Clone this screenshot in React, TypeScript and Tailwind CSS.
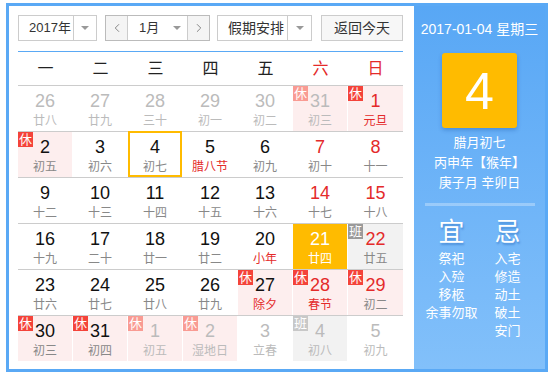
import { ChevronLeft, ChevronRight } from "lucide-react";

type Day = {
  n: number;
  lunar: string;
  other?: boolean;
  red?: boolean;
  fest?: boolean;
  tag?: "休" | "班";
  today?: boolean;
  selected?: boolean;
};

const weeks: Day[][] = [
  [
    { n: 26, lunar: "廿八", other: true },
    { n: 27, lunar: "廿九", other: true },
    { n: 28, lunar: "三十", other: true },
    { n: 29, lunar: "初一", other: true },
    { n: 30, lunar: "初二", other: true },
    { n: 31, lunar: "初三", other: true, tag: "休" },
    { n: 1, lunar: "元旦", red: true, fest: true, tag: "休" },
  ],
  [
    { n: 2, lunar: "初五", tag: "休" },
    { n: 3, lunar: "初六" },
    { n: 4, lunar: "初七", today: true },
    { n: 5, lunar: "腊八节", fest: true },
    { n: 6, lunar: "初九" },
    { n: 7, lunar: "初十", red: true },
    { n: 8, lunar: "十一", red: true },
  ],
  [
    { n: 9, lunar: "十二" },
    { n: 10, lunar: "十三" },
    { n: 11, lunar: "十四" },
    { n: 12, lunar: "十五" },
    { n: 13, lunar: "十六" },
    { n: 14, lunar: "十七", red: true },
    { n: 15, lunar: "十八", red: true },
  ],
  [
    { n: 16, lunar: "十九" },
    { n: 17, lunar: "二十" },
    { n: 18, lunar: "廿一" },
    { n: 19, lunar: "廿二" },
    { n: 20, lunar: "小年", fest: true },
    { n: 21, lunar: "廿四", selected: true },
    { n: 22, lunar: "廿五", red: true, tag: "班" },
  ],
  [
    { n: 23, lunar: "廿六" },
    { n: 24, lunar: "廿七" },
    { n: 25, lunar: "廿八" },
    { n: 26, lunar: "廿九" },
    { n: 27, lunar: "除夕", fest: true, tag: "休" },
    { n: 28, lunar: "春节", red: true, fest: true, tag: "休" },
    { n: 29, lunar: "初二", red: true, tag: "休" },
  ],
  [
    { n: 30, lunar: "初三", tag: "休" },
    { n: 31, lunar: "初四", tag: "休" },
    { n: 1, lunar: "初五", other: true, tag: "休" },
    { n: 2, lunar: "湿地日", other: true, tag: "休" },
    { n: 3, lunar: "立春", other: true },
    { n: 4, lunar: "初八", other: true, tag: "班" },
    { n: 5, lunar: "初九", other: true },
  ],
];

const weekdays = ["一", "二", "三", "四", "五", "六", "日"];

const Caret = () => (
  <span className="block w-0 h-0 border-l-[4px] border-r-[4px] border-t-[4px] border-l-transparent border-r-transparent border-t-[#999]" />
);

const DayCell = ({ d }: { d: Day }) => {
  let bg = "";
  if (d.selected) bg = "bg-[#ffbb00]";
  else if (d.tag === "休") bg = "bg-[#fdeeee]";
  else if (d.tag === "班") bg = "bg-[#f2f2f2]";

  let numColor = "text-[#111]";
  if (d.red) numColor = "text-[#e42a2a]";
  if (d.other) numColor = "text-[#bbb]";
  if (d.selected) numColor = "text-white";

  let lunarColor = "text-[#888]";
  if (d.fest) lunarColor = "text-[#e42a2a]";
  if (d.other) lunarColor = "text-[#bbb]";
  if (d.selected) lunarColor = "text-white";

  let badge = "";
  if (d.tag === "休") badge = d.other ? "bg-[#f99b93]" : "bg-[#f4433a]";
  if (d.tag === "班") badge = d.other ? "bg-[#c8c8c8]" : "bg-[#9a9a9a]";

  return (
    <div className="relative border-r border-white last:border-r-0 h-[45px]">
      <div className={`h-full ${bg} pt-[5px] text-center`}>
        <div className={`text-[18px] leading-[20px] ${numColor} font-['Liberation_Sans',Arial,sans-serif]`}>
          {d.n}
        </div>
        <div className={`mt-[2px] text-[12px] leading-[16px] ${lunarColor}`}>{d.lunar}</div>
      </div>
      {d.tag && (
        <span
          className={`absolute top-0 left-0 w-[15px] h-[15px] ${badge} text-white text-[13px] leading-[15px] text-center`}
        >
          {d.tag}
        </span>
      )}
      {d.today && (
        <span className="absolute -top-[1px] left-0 right-0 bottom-0 border-2 border-[#ffbb00]" />
      )}
    </div>
  );
};

export default function App() {
  return (
    <div className="w-[548px] h-[375px] bg-white pt-[3px] pl-[6px] font-['Liberation_Sans','Noto_Sans_CJK_SC',sans-serif]">
      <div className="w-[542px] h-[369px] border-[3px] border-[#5aa9f5] flex">
        {/* Calendar */}
        <div className="w-[405px] bg-white pt-[9px] pl-[9px] pr-[11px]">
          <div className="flex items-center h-[26px] text-[14px] text-[#333] whitespace-nowrap">
            <div className="flex h-full w-[79px] border border-[#ccc]">
              <span className="w-[54px] shrink-0 pl-[10px] text-[13px] leading-[24px]">2017年</span>
              <span className="flex-1 border-l border-[#ccc] flex items-center justify-center">
                <Caret />
              </span>
            </div>
            <div className="ml-[8px] flex h-full w-[105px] border border-[#bbb]">
              <span className="w-[22px] shrink-0 bg-[#f4f4f4] border-r border-[#ccc] flex items-center justify-center text-[#777]">
                <ChevronLeft size={14} strokeWidth={1.5} />
              </span>
              <span className="w-[59px] shrink-0 flex items-center justify-between pl-[11px] pr-[6px]">
                <span className="text-[13px] leading-[24px]">1月</span>
                <Caret />
              </span>
              <span className="flex-1 bg-[#f4f4f4] border-l border-[#ccc] flex items-center justify-center text-[#777]">
                <ChevronRight size={14} strokeWidth={1.5} />
              </span>
            </div>
            <div className="ml-[7px] flex h-full w-[95px] border border-[#ccc]">
              <span className="w-[69px] shrink-0 pl-[10px] leading-[24px]">假期安排</span>
              <span className="flex-1 border-l border-[#ccc] flex items-center justify-center">
                <Caret />
              </span>
            </div>
            <button className="ml-[9px] h-full w-[82px] border border-[#ccc] bg-[#f7f7f7] text-[14px] text-[#333] leading-[24px]">
              返回今天
            </button>
          </div>
          <div className="mt-[10px] h-px bg-[#5aa9f5]" />
          <div className="grid grid-cols-7 h-[33px] items-center text-center text-[16px]">
            {weekdays.map((w, i) => (
              <span key={w} className={i >= 5 ? "text-[#e42a2a]" : "text-[#222]"}>
                {w}
              </span>
            ))}
          </div>
          {weeks.map((row, i) => (
            <div key={i} className="grid grid-cols-7 border-t border-[#ccc]">
              {row.map((d, j) => (
                <DayCell key={j} d={d} />
              ))}
            </div>
          ))}
        </div>

        {/* Side panel */}
        <div className="flex-1 bg-linear-to-b from-[#58a7f5] to-[#82c0fa] text-white flex flex-col items-center pt-[14px]">
          <div className="text-[14px] leading-[18px]">2017-01-04 星期三</div>
          <div className="mt-[15px] w-[75px] h-[75px] rounded-[3px] bg-[#ffbb00] shadow-[0_2px_4px_rgba(0,60,140,0.3)] flex items-center justify-center text-[52px] leading-none font-['Liberation_Sans',Arial,sans-serif]">
            4
          </div>
          <div className="mt-[5px] text-[13px] leading-[20px] text-center">
            <div>腊月初七</div>
            <div>丙申年【猴年】</div>
            <div>庚子月 辛卯日</div>
          </div>
          <div className="mt-[10px] w-[110px] h-[3px] bg-white/30" />
          <div className="mt-[11px] flex">
            <div className="w-[56px] text-center">
              <div className="text-[26px] leading-[30px] [text-shadow:1px_2px_2px_rgba(0,70,160,0.35)]">宜</div>
              <div className="mt-[3px] text-[13px] leading-[18px]">
                <div>祭祀</div>
                <div>入殓</div>
                <div>移柩</div>
                <div>余事勿取</div>
              </div>
            </div>
            <div className="w-[56px] text-center">
              <div className="text-[26px] leading-[30px] [text-shadow:1px_2px_2px_rgba(0,70,160,0.35)]">忌</div>
              <div className="mt-[3px] text-[13px] leading-[18px]">
                <div>入宅</div>
                <div>修造</div>
                <div>动土</div>
                <div>破土</div>
                <div>安门</div>
              </div>
            </div>
          </div>
        </div>
      </div>
    </div>
  );
}
